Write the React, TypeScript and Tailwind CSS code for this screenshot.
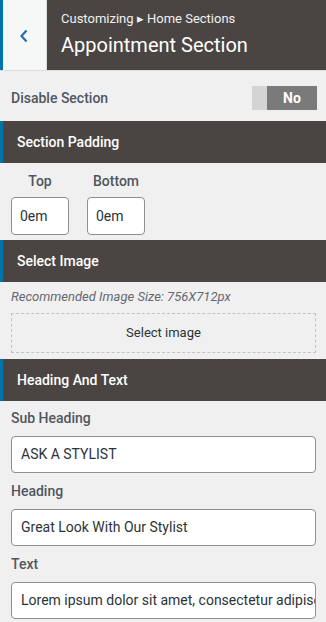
import React from "react";

const Section = ({ title }: { title: string }) => (
  <div className="h-[42px] bg-[#4a4543] border-l-[3px] border-[#0073aa] flex items-center pl-[14px]">
    <span className="text-white text-[14px] font-medium">{title}</span>
  </div>
);

const Field = ({ label, value }: { label: string; value: string }) => (
  <div className="flex flex-col">
    <div className="h-[20px] leading-[20px] text-[14px] font-medium text-[#50575e]">{label}</div>
    <div className="mt-[8px] h-[37px] bg-white border border-[#8c8f94] rounded-[4px] flex items-center pl-[9px] overflow-hidden whitespace-nowrap text-[14px] text-[#2c3338]">
      {value}
    </div>
  </div>
);

export default function App() {
  return (
    <div className="w-[326px] h-[622px] bg-[#f0f0f0] overflow-hidden" style={{ fontFamily: "Roboto, 'Noto Sans', sans-serif" }}>
      {/* Header */}
      <div className="h-[71px] flex border-b border-[#dcdcde]">
        <div className="w-[47px] bg-[#f6f7f7] border-l-[3px] border-[#0073aa] border-r border-r-[#dcdcde] flex items-center justify-center">
          <svg width="10" height="16" viewBox="0 0 10 16" className="mt-[2px] -ml-[2px]">
            <path d="M7.5 2.5 L2.5 8 L7.5 13.5" fill="none" stroke="#2271b1" strokeWidth="2.2" />
          </svg>
        </div>
        <div className="flex-1 bg-[#4a4543] pl-[14px] flex flex-col justify-center">
          <div className="text-[13px] text-[#f0f0f0] leading-[16px] mt-[-2px]">Customizing ▸ Home Sections</div>
          <div className="text-[20px] text-white leading-[26px] mt-[5px]">Appointment Section</div>
        </div>
      </div>

      {/* Disable section */}
      <div className="h-[50px] flex items-center justify-between pl-[11px] pr-[9px] pt-[4px]">
        <span className="text-[14px] font-medium text-[#50575e]">Disable Section</span>
        <div className="w-[65px] h-[24px] flex">
          <div className="w-[15px] bg-[#d4d4d4]" />
          <div className="flex-1 bg-[#7a7a7a] flex items-center justify-center text-white text-[14px] font-bold">No</div>
        </div>
      </div>

      <Section title="Section Padding" />
      <div className="pt-[8px] pb-[5px] pl-[11px] flex gap-[18px]">
        <div className="flex flex-col items-center w-[58px]">
          <div className="h-[20px] leading-[20px] text-[14px] font-medium text-[#50575e]">Top</div>
          <div className="mt-[6px] w-[58px] h-[38px] bg-white border border-[#8c8f94] rounded-[4px] flex items-center pl-[8px] text-[14px] text-[#2c3338]">0em</div>
        </div>
        <div className="flex flex-col items-center w-[58px]">
          <div className="h-[20px] leading-[20px] text-[14px] font-medium text-[#50575e]">Bottom</div>
          <div className="mt-[6px] w-[58px] h-[38px] bg-white border border-[#8c8f94] rounded-[4px] flex items-center pl-[8px] text-[14px] text-[#2c3338]">0em</div>
        </div>
      </div>

      <Section title="Select Image" />
      <div className="pl-[11px] pr-[10px] pt-[6px] pb-[6px]">
        <div className="h-[18px] leading-[18px] text-[13px] italic text-[#646970]">Recommended Image Size: 756X712px</div>
        <div className="mt-[7px] h-[40px] border border-dashed border-[#c3c4c7] flex items-center justify-center text-[13px] text-[#2c3338]">Select image</div>
      </div>

      <Section title="Heading And Text" />
      <div className="pl-[11px] pr-[10px] pt-[7px] flex flex-col gap-[8px]">
        <Field label="Sub Heading" value="ASK A STYLIST" />
        <Field label="Heading" value="Great Look With Our Stylist" />
        <Field label="Text" value="Lorem ipsum dolor sit amet, consectetur adipiscing elit" />
      </div>
    </div>
  );
}
